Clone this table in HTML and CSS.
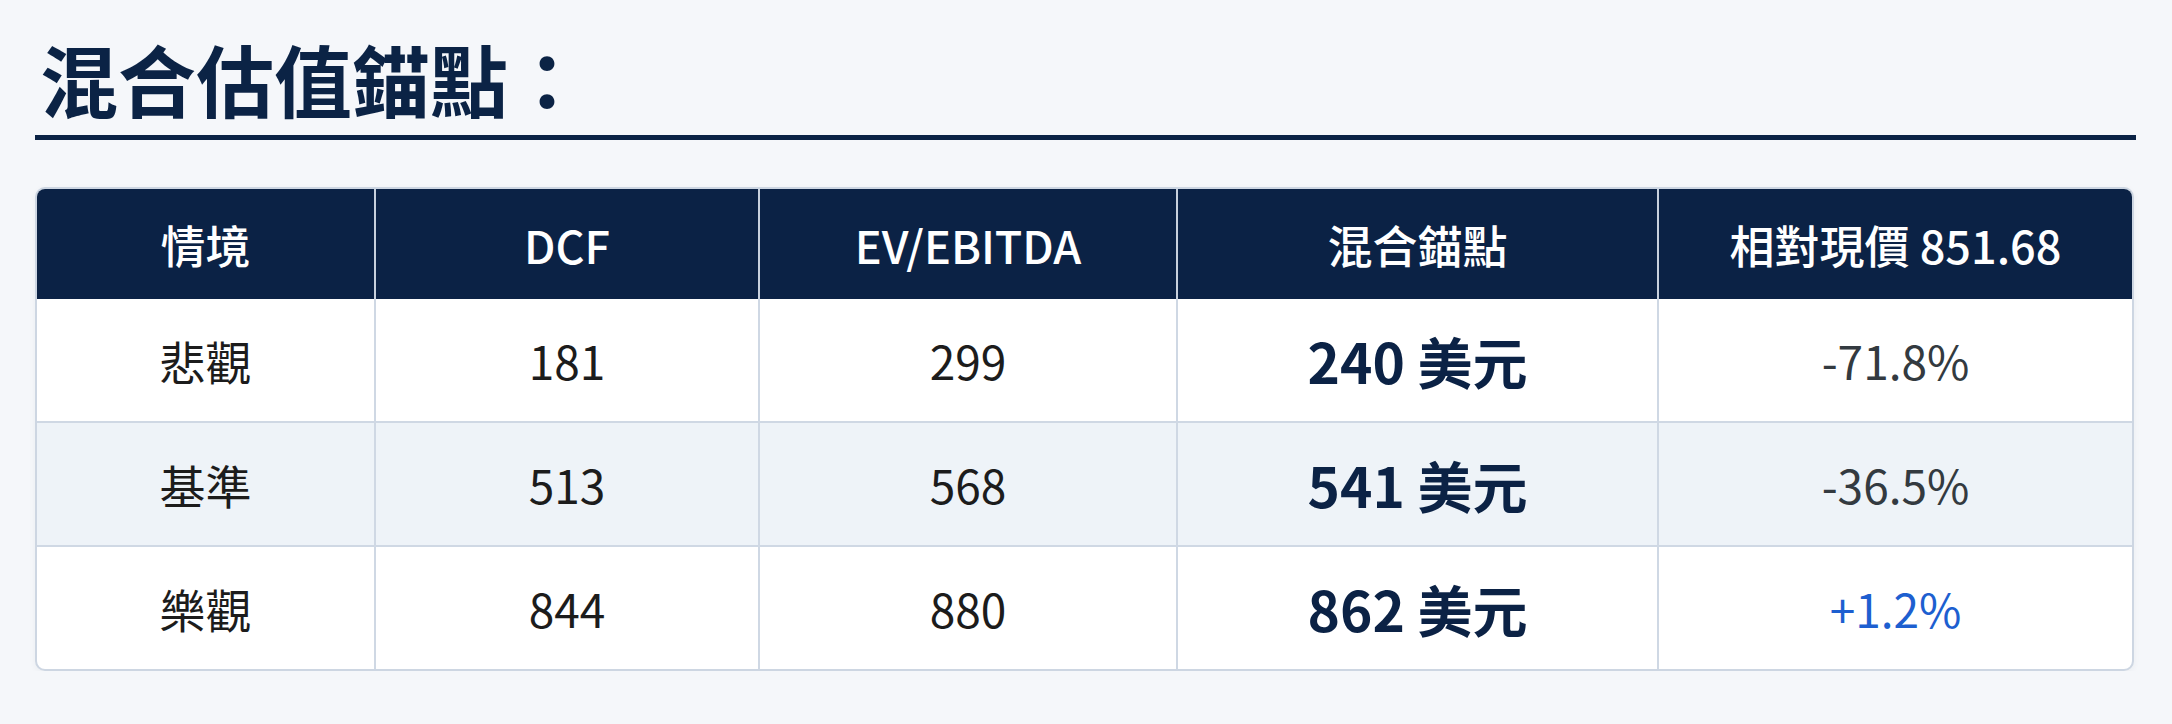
FILE: index.html
```html
<!DOCTYPE html>
<html lang="zh-Hant">
<head>
<meta charset="utf-8">
<title>混合估值錨點</title>
<link rel="stylesheet" href="styles.css">
</head>
<body>
<main class="page">
  <h1 class="title">混合估值錨點：</h1>
  <div class="table-wrap">
    <table class="anchor-table">
      <colgroup>
        <col class="col-scenario">
        <col class="col-dcf">
        <col class="col-ev">
        <col class="col-blend">
        <col class="col-rel">
      </colgroup>
      <thead>
        <tr>
          <th>情境</th>
          <th>DCF</th>
          <th>EV/EBITDA</th>
          <th>混合錨點</th>
          <th>相對現價 851.68</th>
        </tr>
      </thead>
      <tbody>
        <tr>
          <td>悲觀</td>
          <td>181</td>
          <td>299</td>
          <td class="blend">240 美元</td>
          <td class="rel">-71.8%</td>
        </tr>
        <tr class="alt">
          <td>基準</td>
          <td>513</td>
          <td>568</td>
          <td class="blend">541 美元</td>
          <td class="rel">-36.5%</td>
        </tr>
        <tr>
          <td>樂觀</td>
          <td>844</td>
          <td>880</td>
          <td class="blend">862 美元</td>
          <td class="rel up">+1.2%</td>
        </tr>
      </tbody>
    </table>
  </div>
</main>
</body>
</html>
```
FILE: styles.css
```css
html, body {
  margin: 0;
  padding: 0;
}
body {
  background: #f5f7fa;
  font-family: "Noto Sans CJK TC", "Noto Sans", sans-serif;
  color: #1c1c1c;
}
.page {
  padding: 38px 36px 0 35px;
}
.title {
  margin: 0;
  font-size: 78px;
  font-weight: 700;
  line-height: 1;
  color: #0b2345;
  padding: 1px 0 18px 5px;
  border-bottom: 5px solid #0b2345;
  width: 2096px;
}
.table-wrap {
  margin-top: 47px;
  width: 2095px;
  border: 2px solid #cdd6e2;
  border-radius: 10px;
  overflow: hidden;
  background: #ffffff;
  box-shadow: 0 2px 6px rgba(30, 50, 80, 0.05);
}
.anchor-table {
  width: 100%;
  border-collapse: collapse;
  table-layout: fixed;
}
.col-scenario { width: 338px; }
.col-dcf { width: 384px; }
.col-ev { width: 418px; }
.col-blend { width: 481px; }
.col-rel { width: auto; }
.anchor-table th {
  background: #0b2245;
  color: #ffffff;
  font-size: 45px;
  font-weight: 500;
  height: 110px;
  padding: 0;
  text-align: center;
  vertical-align: middle;
  border-right: 2px solid #c8d1dd;
}
.anchor-table td {
  font-size: 46px;
  font-weight: 400;
  height: 122px;
  padding: 0;
  text-align: center;
  vertical-align: middle;
  border-right: 2px solid #cfd8e4;
  border-top: 2px solid #cfd8e4;
  color: #1c1c1c;
}
.anchor-table th:last-child,
.anchor-table td:last-child {
  border-right: none;
}
.anchor-table thead + tbody tr:first-child td {
  border-top: none;
}
.anchor-table tr.alt td {
  background: #eef3f8;
}
.anchor-table td.blend {
  font-size: 55px;
  font-weight: 700;
  color: #0b2245;
}
.anchor-table td.rel {
  color: #333a40;
}
.anchor-table td.rel.up {
  color: #1d5fd0;
}
```
